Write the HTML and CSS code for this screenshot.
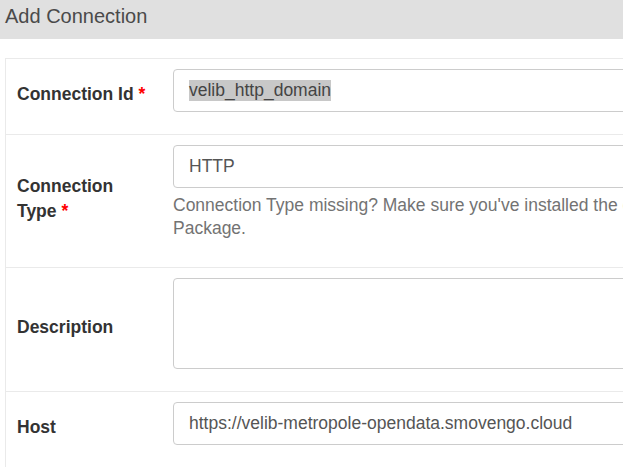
FILE: index.html
```html
<!DOCTYPE html>
<html>
<head>
<meta charset="utf-8">
<link rel="stylesheet" href="styles.css">
</head>
<body>
<div class="page-header">Add Connection</div>
<div class="form-table">
  <div class="row">
    <div class="label"><span class="label-text">Connection Id <span class="req">*</span></span></div>
    <div class="field">
      <div class="input"><span class="sel">velib_http_domain</span></div>
    </div>
  </div>
  <div class="row">
    <div class="label"><span class="label-text">Connection Type <span class="req">*</span></span></div>
    <div class="field">
      <div class="input">HTTP</div>
      <p class="help">Connection Type missing? Make sure you've installed the corresponding Airflow Provider Package.</p>
    </div>
  </div>
  <div class="row">
    <div class="label"><span class="label-text">Description</span></div>
    <div class="field">
      <div class="input textarea"></div>
    </div>
  </div>
  <div class="row">
    <div class="label"><span class="label-text">Host</span></div>
    <div class="field">
      <div class="input">https://velib-metropole-opendata.smovengo.cloud</div>
    </div>
  </div>
</div>
</body>
</html>
```
FILE: styles.css
```css
html, body {
  margin: 0;
  padding: 0;
  overflow: hidden;
  background: #fff;
  font-family: "Liberation Sans", Arial, sans-serif;
}
body {
  width: 623px;
  height: 467px;
}
.page-header {
  background: #e0e0e0;
  height: 39px;
  box-sizing: border-box;
  padding: 4px 0 0 5px;
  font-size: 20px;
  line-height: 24px;
  color: #4a4a4a;
}
.form-table {
  margin: 19px 0 0 5px;
  width: 920px;
  border: 1px solid #eaeaea;
}
.row {
  display: grid;
  grid-template-columns: 167px 720px;
  border-top: 1px solid #eaeaea;
}
.row:first-child {
  border-top: none;
}
.label {
  display: flex;
  align-items: center;
  padding: 0 20px 5px 11px;
  font-size: 17.5px;
  line-height: 25px;
  font-weight: bold;
  color: #333;
}
.label-text {
  display: block;
  width: 136px;
}
.req {
  color: #f00;
}
.field {
  padding: 10px 0 22px 0;
}
.input {
  box-sizing: border-box;
  height: 43px;
  border: 1px solid #ccc;
  border-radius: 4px;
  padding: 0 15px;
  display: flex;
  align-items: center;
  font-size: 17.5px;
  color: #555;
  white-space: nowrap;
}
.sel {
  background: #c8c8c8;
  color: #444;
  line-height: 21px;
}
.textarea {
  height: 91px;
}
.help {
  margin: 6px 0 5px 0;
  font-size: 17.5px;
  line-height: 23px;
  color: #737373;
}
```
